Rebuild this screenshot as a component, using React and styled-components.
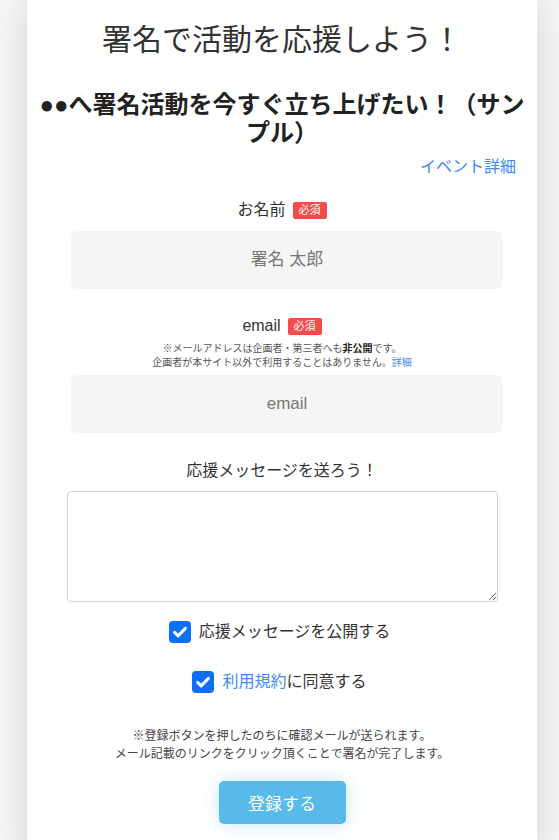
import React, { useState } from 'react'
import styled, { createGlobalStyle } from 'styled-components'

const GlobalStyle = createGlobalStyle`
    body {
        margin: 0;
        background: #f6f6f6;
        font-family: "Liberation Sans", "Noto Sans CJK JP", sans-serif;
        color: #333;
    }
`

const Card = styled.div`
    box-sizing: border-box;
    width: 510px;
    min-height: 100vh;
    margin-left: 27px;
    padding: 22px 10px 40px;
    background: #fff;
    box-shadow: 0 0 34px rgba(0, 0, 0, 0.14);
    display: flex;
    flex-direction: column;
    align-items: center;
`

const Title = styled.h1`
    margin: 0;
    font-size: 30px;
    line-height: 36px;
    font-weight: 400;
    color: #333;
    text-align: center;
`

const EventName = styled.h2`
    margin: 33px 0 0;
    font-size: 24px;
    line-height: 28px;
    font-weight: 700;
    color: #222;
    text-align: center;
`

const Link = styled.a`
    color: #3d8af7;
    text-decoration: none;
    cursor: pointer;
`

const DetailLink = styled(Link)`
    align-self: flex-end;
    margin: 9px 11px 0 0;
    font-size: 16px;
    line-height: 22px;
`

const LabelRow = styled.div`
    display: flex;
    align-items: center;
    gap: 7px;
    margin-top: ${props => props.top}px;
    font-size: 16px;
    line-height: 24px;
    color: #333;
`

const Badge = styled.span`
    display: inline-flex;
    align-items: center;
    justify-content: center;
    width: 34px;
    height: 17px;
    border-radius: 2px;
    background: #f14b4b;
    color: #fff;
    font-size: 11px;
    line-height: 1;
`

const Note = styled.p`
    margin: 4px 0 0;
    font-size: 10px;
    line-height: 14px;
    color: #555;
    text-align: center;

    b {
        color: #222;
    }
`

const TextInput = styled.input`
    box-sizing: border-box;
    width: 432px;
    height: 58px;
    margin: ${props => props.top}px 0 0 10px;
    border: none;
    border-radius: 6px;
    background: #f5f5f5;
    font-family: inherit;
    font-size: 17px;
    color: #333;
    text-align: center;
    outline: none;

    &::placeholder {
        color: #777;
    }
`

const MessageArea = styled.textarea`
    box-sizing: border-box;
    width: 431px;
    height: 111px;
    margin-top: 8px;
    padding: 8px;
    border: 1px solid #ced2d8;
    border-radius: 4px;
    font-family: inherit;
    font-size: 15px;
    outline: none;
`

const CheckRow = styled.label`
    display: flex;
    align-items: center;
    gap: 8px;
    margin: ${props => props.top}px 5px 0 0;
    font-size: 16px;
    line-height: 24px;
    color: #333;
    cursor: pointer;
`

const CheckBox = styled.span`
    display: inline-flex;
    align-items: center;
    justify-content: center;
    width: 22px;
    height: 22px;
    border-radius: 4px;
    background: ${props => props.checked ? '#0b6ff7' : '#fff'};
    border: ${props => props.checked ? 'none' : '1px solid #bbb'};
    box-sizing: border-box;
`

const Notice = styled.p`
    margin: 33px 0 0;
    font-size: 12px;
    line-height: 18px;
    color: #444;
    text-align: center;
`

const SubmitButton = styled.button`
    width: 127px;
    height: 43px;
    margin-top: 18px;
    border: none;
    border-radius: 5px;
    background: #58b9eb;
    box-shadow: 0 0 18px rgba(88, 185, 235, 0.35);
    color: #fff;
    font-family: inherit;
    font-size: 17px;
    cursor: pointer;
`

const Check = ({ checked, onClick }) => (
    <CheckBox checked={checked} onClick={onClick}>
        {checked && (
            <svg width="16" height="16" viewBox="0 0 16 16">
                <path d="M2.6 8.4l3.5 3.5L13.4 4.4" fill="none" stroke="#fff" strokeWidth="3" strokeLinecap="round" strokeLinejoin="round" />
            </svg>
        )}
    </CheckBox>
)

export default function App() {
    const [publish, setPublish] = useState(true)
    const [agree, setAgree] = useState(true)

    return (
        <>
            <GlobalStyle />
            <Card>
                <Title>署名で活動を応援しよう！</Title>
                <EventName>●●へ署名活動を今すぐ立ち上げたい！（サンプル）</EventName>
                <DetailLink>イベント詳細</DetailLink>

                <LabelRow top={20}>
                    お名前<Badge>必須</Badge>
                </LabelRow>
                <TextInput top={9} placeholder="署名 太郎" />

                <LabelRow top={25}>
                    email<Badge>必須</Badge>
                </LabelRow>
                <Note>
                    ※メールアドレスは企画者・第三者へも<b>非公開</b>です。<br />
                    企画者が本サイト以外で利用することはありません。<Link>詳細</Link>
                </Note>
                <TextInput top={5} placeholder="email" />

                <LabelRow top={26}>応援メッセージを送ろう！</LabelRow>
                <MessageArea />

                <CheckRow top={18}>
                    <Check checked={publish} onClick={() => setPublish(!publish)} />
                    応援メッセージを公開する
                </CheckRow>
                <CheckRow top={26}>
                    <Check checked={agree} onClick={() => setAgree(!agree)} />
                    <span><Link>利用規約</Link>に同意する</span>
                </CheckRow>

                <Notice>
                    ※登録ボタンを押したのちに確認メールが送られます。<br />
                    メール記載のリンクをクリック頂くことで署名が完了します。
                </Notice>
                <SubmitButton>登録する</SubmitButton>
            </Card>
        </>
    )
}
